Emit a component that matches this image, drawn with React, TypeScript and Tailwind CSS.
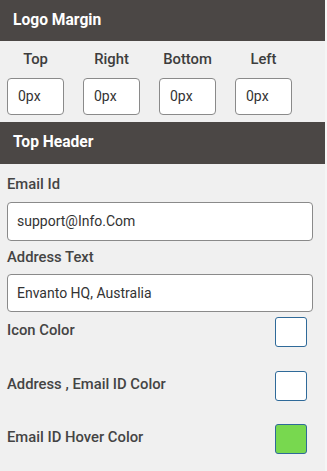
import React from "react";

const font = { fontFamily: "Roboto, 'Liberation Sans', sans-serif" };

function Header({ title, h }: { title: string; h: string }) {
  return (
    <div className={`${h} bg-[#4b4745] flex items-center pl-[13px] text-white font-bold text-[15.6px]`}>
      {title}
    </div>
  );
}

function ColorRow({ label, color, mt }: { label: string; color: string; mt: string }) {
  return (
    <div className={`flex items-center justify-between pl-[7px] pr-[18px] ${mt}`}>
      <span className="text-[14.8px] font-medium text-[#444] -mt-[4px]">{label}</span>
      <div className={`w-[32px] h-[30px] rounded-[3px] border border-[#2f6a99] ${color}`} />
    </div>
  );
}

export default function App() {
  const sides = ["Top", "Right", "Bottom", "Left"];
  return (
    <div className="w-[327px] h-[471px] bg-[#f5f5f5]" style={font}>
      <div className="w-[325px] h-[471px] bg-[#f0f0f0]">
        <Header title="Logo Margin" h="h-[41px]" />
        <div className="flex pl-[7px] gap-[19px] pt-[10px]">
          {sides.map((s) => (
            <div key={s} className="w-[57px] flex flex-col items-center">
              <span className="text-[14.8px] font-medium text-[#3d3d3d] leading-[16px]">{s}</span>
              <div className="mt-[11px] w-[57px] h-[37px] bg-white border border-[#8a8a8a] rounded-[4px] flex items-center pl-[10px] text-[14px] text-[#333]">
                0px
              </div>
            </div>
          ))}
        </div>
        <div className="mt-[7px]">
          <Header title="Top Header" h="h-[42px]" />
        </div>
        <div className="pl-[7px] pt-[12px] text-[14.8px] font-medium text-[#444] leading-[16px]">Email Id</div>
        <div className="ml-[7px] mt-[10px] w-[306px] h-[39px] bg-white border border-[#8a8a8a] rounded-[4px] flex items-center pl-[9px] text-[14px] text-[#333]">
          support@Info.Com
        </div>
        <div className="pl-[7px] pt-[8px] text-[14.8px] font-medium text-[#444] leading-[16px]">Address Text</div>
        <div className="ml-[7px] mt-[9px] w-[306px] h-[38px] bg-white border border-[#8a8a8a] rounded-[4px] flex items-center pl-[9px] text-[14px] text-[#333]">
          Envanto HQ, Australia
        </div>
        <ColorRow label="Icon Color" color="bg-white" mt="mt-[5px]" />
        <ColorRow label="Address , Email ID Color" color="bg-white" mt="mt-[24px]" />
        <ColorRow label="Email ID Hover Color" color="bg-[#78d84f]" mt="mt-[23px]" />
      </div>
    </div>
  );
}
